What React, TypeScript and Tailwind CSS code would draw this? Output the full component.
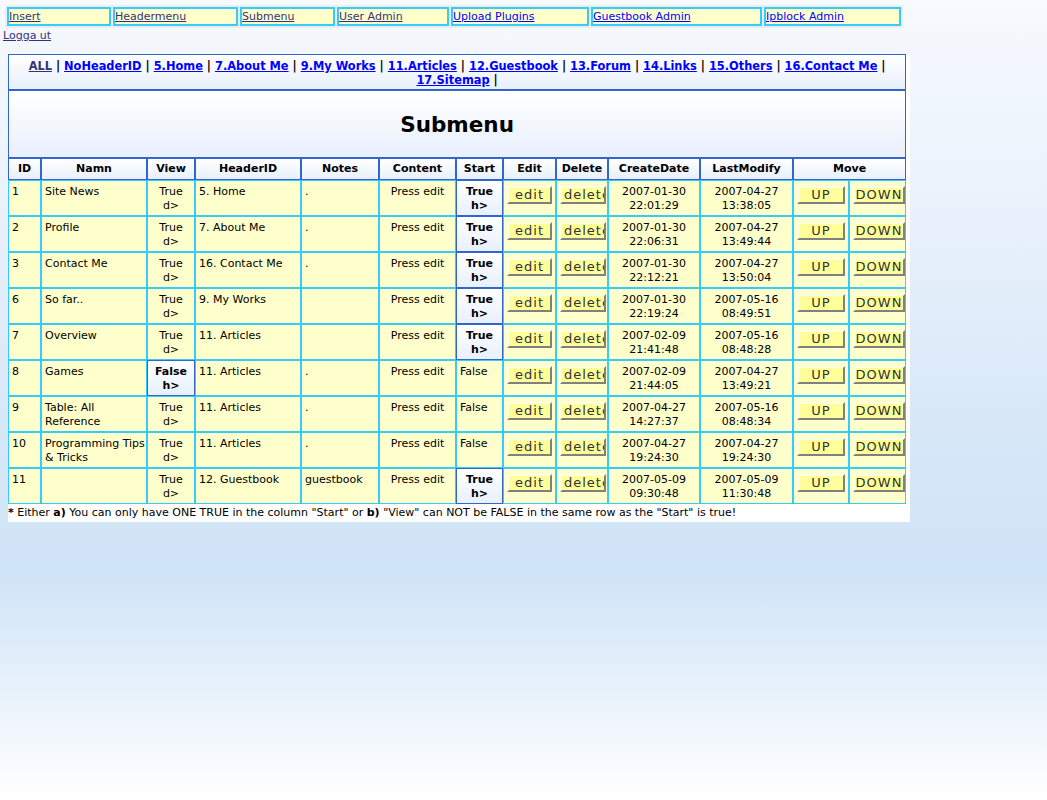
const navItems = [
  { label: "Insert", w: "w-[104px]", visited: true },
  { label: "Headermenu", w: "w-[125px]", visited: true },
  { label: "Submenu", w: "w-[95px]", visited: true },
  { label: "User Admin", w: "w-[112px]", visited: true },
  { label: "Upload Plugins", w: "w-[138px]", visited: false },
  { label: "Guestbook Admin", w: "w-[171px]", visited: false },
  { label: "Ipblock Admin", w: "w-[137px]", visited: false },
];

const headerLinks = [
  "NoHeaderID",
  "5.Home",
  "7.About Me",
  "9.My Works",
  "11.Articles",
  "12.Guestbook",
  "13.Forum",
  "14.Links",
  "15.Others",
  "16.Contact Me",
  "17.Sitemap",
];

type Row = {
  id: string;
  name: string[];
  viewTrue: boolean;
  header: string;
  notes: string;
  startTrue: boolean;
  created: [string, string];
  modified: [string, string];
};

const rows: Row[] = [
  { id: "1", name: ["Site News"], viewTrue: true, header: "5. Home", notes: ".", startTrue: true, created: ["2007-01-30", "22:01:29"], modified: ["2007-04-27", "13:38:05"] },
  { id: "2", name: ["Profile"], viewTrue: true, header: "7. About Me", notes: ".", startTrue: true, created: ["2007-01-30", "22:06:31"], modified: ["2007-04-27", "13:49:44"] },
  { id: "3", name: ["Contact Me"], viewTrue: true, header: "16. Contact Me", notes: ".", startTrue: true, created: ["2007-01-30", "22:12:21"], modified: ["2007-04-27", "13:50:04"] },
  { id: "6", name: ["So far.."], viewTrue: true, header: "9. My Works", notes: "", startTrue: true, created: ["2007-01-30", "22:19:24"], modified: ["2007-05-16", "08:49:51"] },
  { id: "7", name: ["Overview"], viewTrue: true, header: "11. Articles", notes: "", startTrue: true, created: ["2007-02-09", "21:41:48"], modified: ["2007-05-16", "08:48:28"] },
  { id: "8", name: ["Games"], viewTrue: false, header: "11. Articles", notes: ".", startTrue: false, created: ["2007-02-09", "21:44:05"], modified: ["2007-04-27", "13:49:21"] },
  { id: "9", name: ["Table: All", "Reference"], viewTrue: true, header: "11. Articles", notes: ".", startTrue: false, created: ["2007-04-27", "14:27:37"], modified: ["2007-05-16", "08:48:34"] },
  { id: "10", name: ["Programming Tips", "& Tricks"], viewTrue: true, header: "11. Articles", notes: ".", startTrue: false, created: ["2007-04-27", "19:24:30"], modified: ["2007-04-27", "19:24:30"] },
  { id: "11", name: [""], viewTrue: true, header: "12. Guestbook", notes: "guestbook", startTrue: true, created: ["2007-05-09", "09:30:48"], modified: ["2007-05-09", "11:30:48"] },
];

const td = "border border-[#33ccff] bg-[#ffffcc] px-[3px] pt-[4px] pb-[2px] align-top leading-[14px] font-normal";
const th =
  "border border-[#3366cc] bg-[linear-gradient(to_bottom,#ffffff,#e8f0fc)] px-[3px] pt-[4px] pb-[2px] align-top text-center font-bold leading-[14px]";
const btn =
  "mt-[1px] block h-[18px] overflow-hidden whitespace-nowrap border-2 border-t-[#ffffe6] border-l-[#ffffe6] border-r-[#808080] border-b-[#808080] bg-[#ffff99] text-[13px] leading-[14px] tracking-[1px] text-[#333333]";

const App = () => {
  return (
    <div className="min-h-[800px] w-full bg-[linear-gradient(to_bottom,#f7fafe_0%,#eaf2fc_25%,#d6e7f8_55%,#d0e4f7_72%,#ffffff_100%)] pt-[5px] font-['DejaVu_Sans',Verdana,sans-serif] text-[11px] text-black">
      {/* top admin menu */}
      <div className="ml-[5px] flex w-[898px] gap-[2px] bg-[#ededed] p-[2px]">
        {navItems.map((n) => (
          <div key={n.label} className={`${n.w} h-[19px] border-2 border-[#33ccff] bg-[#ffffcc] leading-[15px]`}>
            <a href="#" className={`underline ${n.visited ? "text-[#333377]" : "text-[#0000ff]"}`}>
              {n.label}
            </a>
          </div>
        ))}
      </div>
      <div className="ml-[3px] mt-[1px] leading-[14px]">
        <a href="#" className="text-[#333377] underline">
          Logga ut
        </a>
      </div>

      <div className="ml-[8px] mt-[11px] w-[902px] bg-white">
        <table className="w-[898px] table-fixed border-separate border-spacing-0">
          <colgroup>
            <col className="w-[33px]" />
            <col className="w-[106px]" />
            <col className="w-[48px]" />
            <col className="w-[106px]" />
            <col className="w-[78px]" />
            <col className="w-[77px]" />
            <col className="w-[47px]" />
            <col className="w-[53px]" />
            <col className="w-[52px]" />
            <col className="w-[92px]" />
            <col className="w-[93px]" />
            <col className="w-[56px]" />
            <col className="w-[57px]" />
          </colgroup>
          <thead>
            <tr>
              <th colSpan={13} className={`${th} text-[11.4px]`}>
                <a href="#" className="text-[#333377] underline">
                  ALL
                </a>
                {headerLinks.map((l) => (
                  <span key={l}>
                    {" | "}
                    <a href="#" className="text-[#0000ff] underline">
                      {l}
                    </a>
                  </span>
                ))}
                {" |"}
              </th>
            </tr>
            <tr>
              <th colSpan={13} className={`${th} h-[68px] !align-middle text-[21.5px]`}>
                Submenu
              </th>
            </tr>
            <tr>
              {["ID", "Namn", "View", "HeaderID", "Notes", "Content", "Start", "Edit", "Delete", "CreateDate", "LastModify"].map((h) => (
                <th key={h} className={`${th} !pt-[3px] !pb-[3px] !bg-white`}>
                  {h}
                </th>
              ))}
              <th colSpan={2} className={`${th} !pt-[3px] !pb-[3px] !bg-white`}>
                Move
              </th>
            </tr>
          </thead>
          <tbody>
            {rows.map((r) => (
              <tr key={r.id}>
                <td className={td}>{r.id}</td>
                <td className={td}>
                  {r.name.map((n, i) => (
                    <div key={i} className="whitespace-nowrap">
                      {n}
                    </div>
                  ))}
                </td>
                {r.viewTrue ? (
                  <td className={`${td} text-center`}>
                    True
                    <br />
                    d&gt;
                  </td>
                ) : (
                  <th className={th}>
                    False
                    <br />
                    h&gt;
                  </th>
                )}
                <td className={td}>{r.header}</td>
                <td className={td}>{r.notes}</td>
                <td className={`${td} text-center`}>Press edit</td>
                {r.startTrue ? (
                  <th className={th}>
                    True
                    <br />
                    h&gt;
                  </th>
                ) : (
                  <td className={td}>False</td>
                )}
                <td className={td}>
                  <button className={`${btn} w-[45px] text-center`}>edit</button>
                </td>
                <td className={td}>
                  <button className={`${btn} w-[46px] pl-[2px] text-left`}>delete</button>
                </td>
                <td className={`${td} text-center`}>
                  {r.created[0]}
                  <br />
                  {r.created[1]}
                </td>
                <td className={`${td} text-center`}>
                  {r.modified[0]}
                  <br />
                  {r.modified[1]}
                </td>
                <td className={td}>
                  <button className={`${btn} w-[48px] text-center`}>UP</button>
                </td>
                <td className={td}>
                  <button className={`${btn} w-[52px] text-center`}>DOWN</button>
                </td>
              </tr>
            ))}
          </tbody>
        </table>
        <p className="pt-[2px] pb-[2px] leading-[14px]">
          <b>*</b> Either <b>a)</b> You can only have ONE TRUE in the column "Start" or <b>b)</b> "View" can NOT be FALSE in the same
          row as the "Start" is true!
        </p>
      </div>
    </div>
  );
};

export default App;
